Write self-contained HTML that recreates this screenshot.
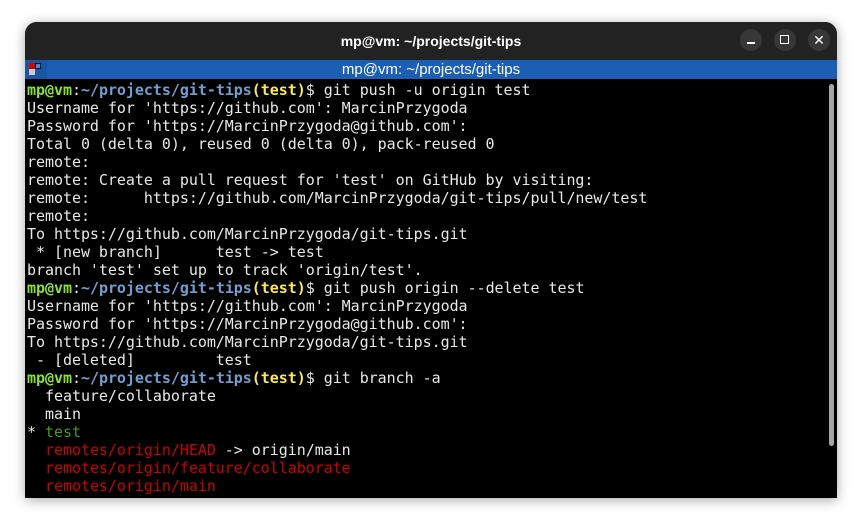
<!DOCTYPE html><html><head><style>
body{margin:0;width:863px;height:527px;background:#fff;overflow:hidden;font-family:"Liberation Sans",sans-serif}
.win{position:absolute;left:25px;top:22px;width:812px;height:476px;background:#000;border-radius:12px 12px 0 0;overflow:hidden;box-shadow:0 2px 12px rgba(0,0,0,.35)}
.tb{height:38px;background:#222;color:#fff;font-weight:bold;font-size:14px;text-align:center;line-height:38px}
.btn{position:absolute;top:7px;width:22px;height:22px;border-radius:11px;background:#373737}
.blue{position:absolute;top:38px;left:0;width:812px;height:19px;background:#1c5eb4;color:#fff;font-size:15px;text-align:center;line-height:19px}
.term{position:absolute;top:59px;left:2px;font-family:"DejaVu Sans Mono",monospace;font-size:15px;letter-spacing:-0.04px;line-height:18px;color:#e8e8e8;white-space:pre}
.g{color:#8ae234;font-weight:bold}.b{color:#729fcf;font-weight:bold}.y{color:#fce94f;font-weight:bold}.gr{color:#4e9a06}.r{color:#cc0000}
.sb{position:absolute;left:804px;top:62px;width:5px;height:362px;background:#a5a5a5;border-radius:3px}
</style></head><body><div class="win">
<div class="tb">mp@vm: ~/projects/git-tips</div>
<div class="btn" style="left:715px"><div style="position:absolute;left:7px;top:13px;width:8px;height:1.5px;background:#fff"></div></div>
<div class="btn" style="left:749px"><div style="position:absolute;left:6px;top:6px;width:7px;height:7px;border:1.5px solid #fff"></div></div>
<div class="btn" style="left:783px;color:#fff;text-align:center;line-height:22px;font-size:14px">✕</div>
<div class="blue"><div style="position:absolute;left:0;top:0;width:22px;height:19px;background:#1a55a3"><div style="position:absolute;left:4px;top:3px;width:6px;height:6px;background:#d00"></div><div style="position:absolute;left:10px;top:3px;width:6px;height:6px;background:#3c8fe0;box-shadow:inset 0 0 0 1px #111"></div><div style="position:absolute;left:4px;top:9px;width:6px;height:6px;background:#ccc"></div><div style="position:absolute;left:10px;top:9px;width:6px;height:6px;background:#1a55a3"></div></div>mp@vm: ~/projects/git-tips</div>
<div class="term"><span class="g">mp@vm</span>:<span class="b">~/projects/git-tips</span><span class="y">(test)</span>$ git push -u origin test
Username for 'https://github.com': MarcinPrzygoda
Password for 'https://MarcinPrzygoda@github.com':
Total 0 (delta 0), reused 0 (delta 0), pack-reused 0
remote:
remote: Create a pull request for 'test' on GitHub by visiting:
remote:      https://github.com/MarcinPrzygoda/git-tips/pull/new/test
remote:
To https://github.com/MarcinPrzygoda/git-tips.git
 * [new branch]      test -> test
branch 'test' set up to track 'origin/test'.
<span class="g">mp@vm</span>:<span class="b">~/projects/git-tips</span><span class="y">(test)</span>$ git push origin --delete test
Username for 'https://github.com': MarcinPrzygoda
Password for 'https://MarcinPrzygoda@github.com':
To https://github.com/MarcinPrzygoda/git-tips.git
 - [deleted]         test
<span class="g">mp@vm</span>:<span class="b">~/projects/git-tips</span><span class="y">(test)</span>$ git branch -a
  feature/collaborate
  main
* <span class="gr">test</span>
  <span class="r">remotes/origin/HEAD</span> -> origin/main
  <span class="r">remotes/origin/feature/collaborate</span>
  <span class="r">remotes/origin/main</span></div>
<div class="sb"></div>
</div></body></html>
